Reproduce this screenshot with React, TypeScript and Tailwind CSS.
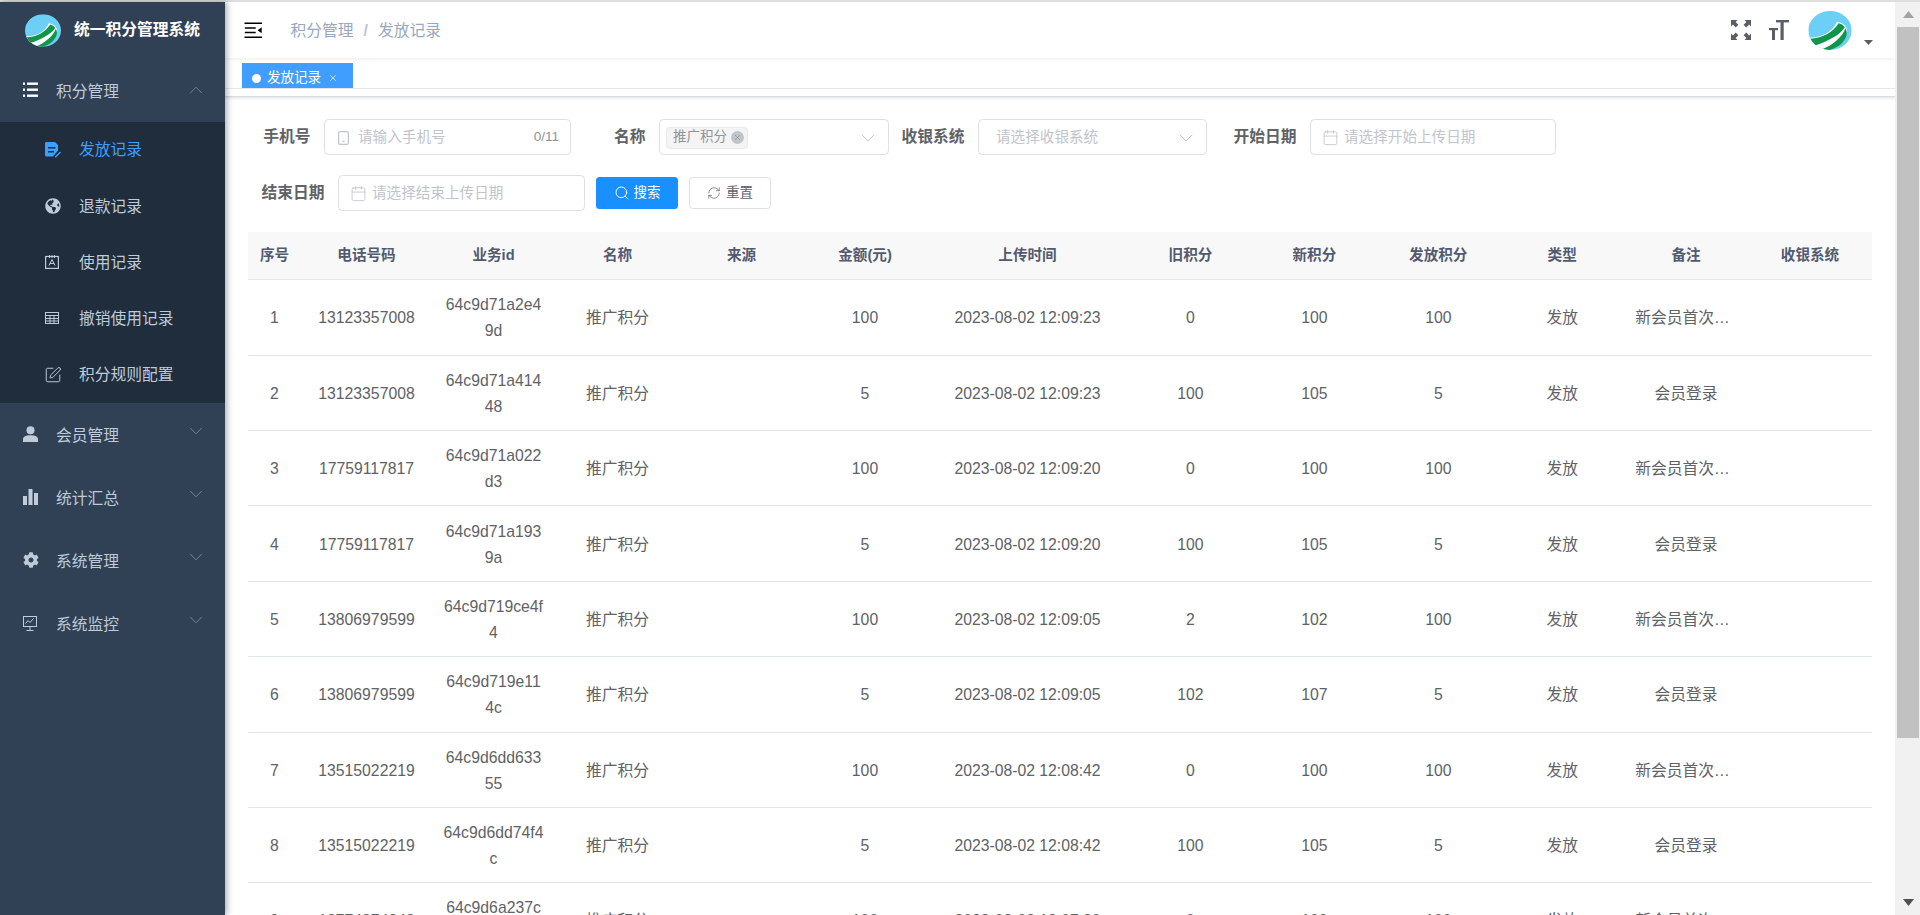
import { ChevronDown, ChevronUp, Calendar, Search, RefreshCw, SquarePen, X } from 'lucide-react'
import { FaGlobeAmericas, FaCog } from 'react-icons/fa'
import type { ReactNode } from 'react'

const rows = [
  ['1', '13123357008', '64c9d71a2e4', '9d', '100', '2023-08-02 12:09:23', '0', '100', '100', '新会员首次消费赠送'],
  ['2', '13123357008', '64c9d71a414', '48', '5', '2023-08-02 12:09:23', '100', '105', '5', '会员登录'],
  ['3', '17759117817', '64c9d71a022', 'd3', '100', '2023-08-02 12:09:20', '0', '100', '100', '新会员首次消费赠送'],
  ['4', '17759117817', '64c9d71a193', '9a', '5', '2023-08-02 12:09:20', '100', '105', '5', '会员登录'],
  ['5', '13806979599', '64c9d719ce4f', '4', '100', '2023-08-02 12:09:05', '2', '102', '100', '新会员首次消费赠送'],
  ['6', '13806979599', '64c9d719e11', '4c', '5', '2023-08-02 12:09:05', '102', '107', '5', '会员登录'],
  ['7', '13515022219', '64c9d6dd633', '55', '100', '2023-08-02 12:08:42', '0', '100', '100', '新会员首次消费赠送'],
  ['8', '13515022219', '64c9d6dd74f4', 'c', '5', '2023-08-02 12:08:42', '100', '105', '5', '会员登录'],
  ['9', '18774874848', '64c9d6a237c', '1e', '100', '2023-08-02 12:07:20', '0', '100', '100', '新会员首次消费赠送'],
]

const headers = ['序号', '电话号码', '业务id', '名称', '来源', '金额(元)', '上传时间', '旧积分', '新积分', '发放积分', '类型', '备注', '收银系统']

const gridCols = 'grid grid-cols-[54px_130px_124px_124px_124px_123px_202px_repeat(6,1fr)]'

function Logo({ className, clipId }: { className: string; clipId: string }) {
  return (
    <svg viewBox="0 0 100 90" className={className}>
      <defs>
        <clipPath id={clipId}>
          <ellipse cx="50" cy="45" rx="50" ry="45" />
        </clipPath>
      </defs>
      <g clipPath={`url(#${clipId})`}>
        <rect width="100" height="90" fill="#6ccff6" />
        <path d="M0 62C30 62 55 50 66 25C78 26 88 34 90 46C84 70 60 90 40 90H10Z" fill="#fff" />
        <path d="M4 64C34 62 58 48 70 28C78 30 82 34 84 38C74 54 46 70 14 80Z" fill="#0f9648" />
        <path d="M28 90C56 80 78 60 86 40C92 52 88 62 78 74C68 84 50 92 36 92Z" fill="#0f9648" />
      </g>
    </svg>
  )
}

function ListIcon() {
  return (
    <svg viewBox="0 0 15 16" className="w-[15px] h-[16px]" fill="#fff">
      <rect x="0" y="0.5" width="2" height="2.4" />
      <rect x="4" y="0.5" width="11" height="2.4" />
      <rect x="0" y="6.5" width="2" height="2.4" />
      <rect x="4" y="6.5" width="11" height="2.4" />
      <rect x="0" y="12.5" width="2" height="2.4" />
      <rect x="4" y="12.5" width="11" height="2.4" />
    </svg>
  )
}

function DocIcon() {
  return (
    <svg viewBox="0 0 16 16" className="w-[16px] h-[16px]">
      <path d="M1.5 0H10L13 3V8.5L8 14.5H1.5C.7 14.5 0 13.8 0 13V1.5C0 .7.7 0 1.5 0Z" fill="#409eff" />
      <rect x="3" y="5" width="7.5" height="1.5" fill="#1f2d3d" />
      <rect x="3" y="9" width="6" height="1.5" fill="#1f2d3d" />
      <path d="M10 14.5L15 9.5L16 10.5L11 15.5H10Z" fill="#409eff" />
    </svg>
  )
}

function BadgeIcon() {
  return (
    <svg viewBox="0 0 14 14" className="w-[14px] h-[14px]" fill="none" stroke="#bfcbd9">
      <rect x=".6" y="1.5" width="12.8" height="11.9" strokeWidth="1.2" />
      <path d="M4.5 0v3M7 0v3M9.5 0v3" strokeWidth="1" />
      <path d="M4 10.5L7 4.5L10 10.5M5 8.5H9" strokeWidth="1" />
    </svg>
  )
}

function TableIcon() {
  return (
    <svg viewBox="0 0 14 12" className="w-[14px] h-[12px]" fill="none" stroke="#bfcbd9" strokeWidth="1">
      <rect x=".5" y=".5" width="13" height="11" />
      <path d="M.5 3.5H13.5M.5 6.5H13.5M.5 9H13.5M5 3.5V11.5M9 3.5V11.5" />
    </svg>
  )
}

function UserIcon() {
  return (
    <svg viewBox="0 0 15 16" className="w-[15px] h-[16px]" fill="#bfcbd9">
      <circle cx="7.5" cy="4.2" r="4" />
      <path d="M0 16V13C0 10.5 3 9.2 7.5 9.2S15 10.5 15 13V16Z" />
    </svg>
  )
}

function BarsIcon() {
  return (
    <svg viewBox="0 0 15 16" className="w-[15px] h-[16px]" fill="#bfcbd9">
      <rect x="0" y="7" width="4" height="9" />
      <rect x="5.5" y="0" width="4" height="16" />
      <rect x="11" y="4" width="4" height="12" />
    </svg>
  )
}

function MonitorIcon() {
  return (
    <svg viewBox="0 0 14 15" className="w-[14px] h-[15px]" fill="none" stroke="#bfcbd9" strokeWidth="1">
      <rect x=".5" y=".5" width="13" height="10" />
      <path d="M2.5 7.5L5 4.5L7 6.5L10.5 2.5M7 10.5V14M3.5 14.5H10.5" />
    </svg>
  )
}

function PhoneIcon() {
  return (
    <svg viewBox="0 0 11 14" className="w-[11px] h-[14px] mr-[9px]" fill="none" stroke="#c0c4cc">
      <rect x=".6" y=".6" width="9.8" height="12.8" rx="1.5" strokeWidth="1.2" />
      <path d="M4.5 10.5H6.5" strokeWidth="1.4" />
    </svg>
  )
}

function HamburgerIcon() {
  return (
    <svg viewBox="0 0 1024 1024" className="w-[22.5px] h-[22.5px] -scale-x-100" fill="#000">
      <path d="M408 442h480c4.4 0 8-3.6 8-8v-56c0-4.4-3.6-8-8-8H408c-4.4 0-8 3.6-8 8v56c0 4.4 3.6 8 8 8zm-8 204c0 4.4 3.6 8 8 8h480c4.4 0 8-3.6 8-8v-56c0-4.4-3.6-8-8-8H408c-4.4 0-8 3.6-8 8v56zm504-486H120c-4.4 0-8 3.6-8 8v56c0 4.4 3.6 8 8 8h784c4.4 0 8-3.6 8-8v-56c0-4.4-3.6-8-8-8zm0 632H120c-4.4 0-8 3.6-8 8v56c0 4.4 3.6 8 8 8h784c4.4 0 8-3.6 8-8v-56c0-4.4-3.6-8-8-8zM142.4 642.1L298.7 519a8.84 8.84 0 0 0 0-13.9L142.4 381.9c-5.8-4.6-14.4-.5-14.4 6.9v246.3a8.9 8.9 0 0 0 14.4 7z" />
    </svg>
  )
}

function FullscreenIcon() {
  return (
    <svg viewBox="0 0 20 20" className="w-[20px] h-[20px]" fill="#5a5e66" stroke="none">
      <path d="M0 0H6.5L4.6 1.9L7.4 4.7L4.7 7.4L1.9 4.6L0 6.5Z" />
      <path d="M20 0H13.5L15.4 1.9L12.6 4.7L15.3 7.4L18.1 4.6L20 6.5Z" />
      <path d="M0 20H6.5L4.6 18.1L7.4 15.3L4.7 12.6L1.9 15.4L0 13.5Z" />
      <path d="M20 20H13.5L15.4 18.1L12.6 15.3L15.3 12.6L18.1 15.4L20 13.5Z" />
    </svg>
  )
}

function SizeIcon() {
  return (
    <svg viewBox="0 0 20 20" className="w-[20px] h-[20px]" fill="#5a5e66">
      <rect x="7" y="0" width="13" height="2.4" />
      <rect x="11.5" y="0" width="3.2" height="20" />
      <rect x="0" y="8" width="9" height="2.2" />
      <rect x="3" y="8" width="3" height="12" />
    </svg>
  )
}

function MenuGroup({ icon, label, open }: { icon: ReactNode; label: string; open?: boolean }) {
  return (
    <div className="h-[63px] flex items-center pl-[23px] pr-[18px] text-[15.75px] text-[#bfcbd9]">
      <span className="w-[33px] flex items-center shrink-0">{icon}</span>
      <span className="flex-1 mt-[3px]">{label}</span>
      {open ? (
        <ChevronUp size={22} strokeWidth={1} className="text-[#7d8896]" />
      ) : (
        <ChevronDown size={22} strokeWidth={1} className="text-[#7d8896] -mt-[6px]" />
      )}
    </div>
  )
}

function SubItem({ icon, label, active }: { icon: ReactNode; label: string; active?: boolean }) {
  return (
    <div className={`h-[56.25px] flex items-center pl-[45px] text-[15.75px] ${active ? 'text-[#409eff]' : 'text-[#bfcbd9]'}`}>
      <span className="w-[34px] flex items-center shrink-0">{icon}</span>
      <span className="mt-[1px]">{label}</span>
    </div>
  )
}

function Sidebar() {
  return (
    <aside className="relative z-20 w-[225px] shrink-0 bg-[#304156] shadow-[2px_0_6px_rgba(0,21,41,0.35)]">
      <div className="h-[56.5px] flex items-center pl-[25px]">
        <Logo className="w-[36px] h-[33px]" clipId="logo-side" />
        <span className="ml-[13px] text-[15.75px] font-bold text-white whitespace-nowrap">统一积分管理系统</span>
      </div>
      <MenuGroup icon={<ListIcon />} label="积分管理" open />
      <div className="bg-[#1f2d3d]">
        <SubItem icon={<DocIcon />} label="发放记录" active />
        <SubItem icon={<FaGlobeAmericas size={16} />} label="退款记录" />
        <SubItem icon={<BadgeIcon />} label="使用记录" />
        <SubItem icon={<TableIcon />} label="撤销使用记录" />
        <SubItem icon={<SquarePen size={18} strokeWidth={1.3} className="-ml-px" />} label="积分规则配置" />
      </div>
      <MenuGroup icon={<UserIcon />} label="会员管理" />
      <MenuGroup icon={<BarsIcon />} label="统计汇总" />
      <MenuGroup icon={<FaCog size={16} />} label="系统管理" />
      <MenuGroup icon={<MonitorIcon />} label="系统监控" />
    </aside>
  )
}

function TopBar() {
  return (
    <header className="relative z-10 h-[56px] shrink-0 flex items-center bg-white shadow-[0_1px_4px_rgba(0,21,41,0.08)]">
      <div className="ml-[17px]">
        <HamburgerIcon />
      </div>
      <div className="ml-[26px] mt-[2px] text-[15.75px] text-[#97a8be]">
        积分管理<span className="mx-[10px] font-bold text-[#c0c4cc]">/</span>发放记录
      </div>
      <div className="ml-auto flex items-center mr-[22px]">
        <FullscreenIcon />
        <span className="ml-[18px]">
          <SizeIcon />
        </span>
        <Logo className="ml-[19px] w-[44px] h-[39px]" clipId="logo-top" />
        <svg viewBox="0 0 9 5" className="ml-[12px] mt-[24px] w-[9px] h-[5px]" fill="#5a5e66">
          <path d="M0 0H9L4.5 5Z" />
        </svg>
      </div>
    </header>
  )
}

function TagBar() {
  return (
    <div className="h-[39px] shrink-0 bg-white shadow-[0_1px_3px_rgba(0,0,0,0.12)] border-b border-[#d8dce5]">
      <div className="h-[31px] border-b border-[#e8e8e8] pl-[17px] flex items-end">
        <div className="h-[25px] w-[111px] pt-[5px] bg-[#409eff] text-white flex items-center pl-[10px] text-[13.5px]">
          <span className="w-[9px] h-[9px] rounded-full bg-white mr-[6px]" />
          发放记录
          <X size={10} className="ml-[7px] opacity-80" />
        </div>
      </div>
    </div>
  )
}

function FormLabel({ text, className }: { text: string; className: string }) {
  return <label className={`shrink-0 text-right pr-[13.5px] text-[15.75px] font-bold text-[#606266] whitespace-nowrap ${className}`}>{text}</label>
}

function Field({ className, children }: { className: string; children: ReactNode }) {
  return (
    <div className={`h-[36px] shrink-0 flex items-center border border-[#dcdfe6] rounded-[4.5px] pt-[1px] text-[14.6px] text-[#c0c4cc] whitespace-nowrap ${className}`}>
      {children}
    </div>
  )
}

function SearchForm() {
  return (
    <div>
      <div className="flex items-center">
        <FormLabel text="手机号" className="w-[76.5px]" />
        <Field className="w-[247px] pl-[13px] pr-[11px]">
          <PhoneIcon />
          请输入手机号
          <span className="ml-auto text-[13.5px] text-[#909399]">0/11</span>
        </Field>
        <FormLabel text="名称" className="w-[88px]" />
        <Field className="w-[230px] pl-[6px] pr-[8px]">
          <span className="h-[22px] flex items-center bg-[#f4f4f5] border border-[#e9e9eb] rounded-[4px] pl-[6px] pr-[3px] text-[13.5px] text-[#909399]">
            推广积分
            <span className="ml-[4px] w-[13px] h-[13px] rounded-full bg-[#c0c4cc] flex items-center justify-center">
              <X size={9} className="text-[#909399]" />
            </span>
          </span>
          <ChevronDown size={24} strokeWidth={1} className="ml-auto" />
        </Field>
        <FormLabel text="收银系统" className="w-[89px]" />
        <Field className="w-[229px] pl-[17px] pr-[8px]">
          请选择收银系统
          <ChevronDown size={24} strokeWidth={1} className="ml-auto" />
        </Field>
        <FormLabel text="开始日期" className="w-[103px]" />
        <Field className="w-[246px] pl-[11px]">
          <Calendar size={17} strokeWidth={1.2} className="mr-[5px]" />
          请选择开始上传日期
        </Field>
      </div>
      <div className="flex items-center mt-[20px]">
        <FormLabel text="结束日期" className="w-[90.5px]" />
        <Field className="w-[247px] pl-[11px]">
          <Calendar size={17} strokeWidth={1.2} className="mr-[5px]" />
          请选择结束上传日期
        </Field>
        <button className="ml-[11px] h-[32px] w-[82px] bg-[#1890ff] rounded-[3.5px] text-white text-[13.5px] flex items-center justify-center">
          <Search size={16} strokeWidth={1.5} className="mr-[4px]" />
          搜索
        </button>
        <button className="ml-[11px] h-[32px] w-[82px] border border-[#dcdfe6] rounded-[3.5px] text-[#606266] text-[13.5px] flex items-center justify-center">
          <RefreshCw size={14} strokeWidth={1.2} className="mr-[5px]" />
          重置
        </button>
      </div>
    </div>
  )
}

function DataTable() {
  return (
    <div className="mt-[21px] text-center">
      <div className={`${gridCols} h-[48.25px] items-center bg-[#f8f8f9] border-b border-[#dfe6ec] text-[14.6px] font-bold text-[#515a6e]`}>
        {headers.map((h) => (
          <div key={h}>{h}</div>
        ))}
      </div>
      {rows.map((r) => (
        <div key={r[0]} className={`${gridCols} h-[75.375px] pt-[2px] items-center border-b border-[#dfe6ec] text-[15.75px] leading-[26px] text-[#606266]`}>
          <div>{r[0]}</div>
          <div>{r[1]}</div>
          <div>
            {r[2]}
            <br />
            {r[3]}
          </div>
          <div>推广积分</div>
          <div></div>
          <div>{r[4]}</div>
          <div>{r[5]}</div>
          <div>{r[6]}</div>
          <div>{r[7]}</div>
          <div>{r[8]}</div>
          <div>发放</div>
          <div className="px-[11px] truncate">{r[9]}</div>
          <div></div>
        </div>
      ))}
    </div>
  )
}

function Scrollbar() {
  return (
    <div className="w-[25px] shrink-0 bg-[#f1f1f1] flex flex-col">
      <div className="h-[25px] flex items-center justify-center">
        <svg viewBox="0 0 11 7" className="w-[11px] h-[7px] ml-[2px]" fill="#a3a3a3">
          <path d="M5.5 0L11 7H0Z" />
        </svg>
      </div>
      <div className="h-[711px] ml-[2px] mr-[1px] bg-[#c1c1c1]" />
      <div className="flex-1" />
      <div className="h-[25px] flex items-center justify-center">
        <svg viewBox="0 0 11 7" className="w-[11px] h-[7px] ml-[2px]" fill="#505050">
          <path d="M0 0H11L5.5 7Z" />
        </svg>
      </div>
    </div>
  )
}

export default function App() {
  return (
    <div className="h-screen flex flex-col overflow-hidden bg-white [font-family:Liberation_Sans,Noto_Sans_CJK_SC,sans-serif]">
      <div className="h-[2px] shrink-0 bg-[#dedede]" />
      <div className="flex flex-1 min-h-0">
        <Sidebar />
        <main className="flex-1 min-w-0 flex flex-col overflow-hidden">
          <TopBar />
          <TagBar />
          <div className="flex-1 min-h-0 pl-[22.5px] pr-[23px] pt-[22px] overflow-hidden">
            <SearchForm />
            <DataTable />
          </div>
        </main>
        <Scrollbar />
      </div>
    </div>
  )
}
